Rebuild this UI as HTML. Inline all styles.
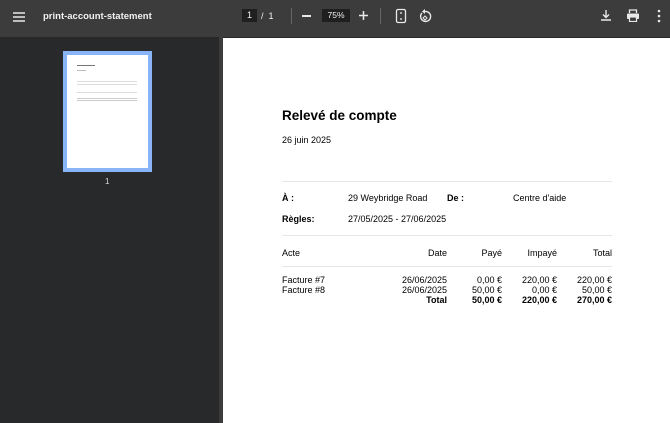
<!DOCTYPE html>
<html><head><meta charset="utf-8"><style>
*{margin:0;padding:0;box-sizing:border-box}
body{width:670px;height:423px;overflow:hidden;background:#282828;font-family:"Liberation Sans",Arial,sans-serif;position:relative}
.tb{position:absolute;left:0;top:0;width:670px;height:37px;background:#3c3c3c;color:#f1f1f1}
.side{position:absolute;left:0;top:37px;width:219px;height:386px;background:#28292b}
.sep{position:absolute;left:219px;top:37px;width:4px;height:386px;background:#3c3c3c}
.page{position:absolute;left:223px;top:38px;width:447px;height:385px;background:#fff;color:#000}
.t{position:absolute;white-space:nowrap}
.r{text-align:right}
.hr{position:absolute;left:59px;width:330px;height:1px;background:#e6e6e6}
</style></head><body>
<div class="tb">
 <svg class="t" style="left:12px;top:10px" width="14" height="14"><path d="M1 3h12M1 7h12M1 11h12" stroke="#e8e8e8" stroke-width="1.6"/></svg>
 <div class="t" style="left:43px;top:11px;font-size:9.5px;font-weight:bold">print-account-statement</div>
 <div class="t" style="left:242px;top:9px;width:15px;height:13px;background:#1f1f1f;font-size:9px;text-align:center;line-height:13px">1</div>
 <div class="t" style="left:261px;top:11px;font-size:9px">/ &nbsp;1</div>
 <div class="t" style="left:291px;top:8px;width:1px;height:16px;background:#666"></div>
 <div class="t" style="left:302px;top:15px;width:9px;height:1.5px;background:#e8e8e8"></div>
 <div class="t" style="left:322px;top:9px;width:28px;height:13px;background:#1f1f1f;font-size:8.5px;text-align:center;line-height:13px">75%</div>
 <svg class="t" style="left:358px;top:10px" width="11" height="11"><path d="M5.5 1v9M1 5.5h9" stroke="#e8e8e8" stroke-width="1.5"/></svg>
 <div class="t" style="left:380px;top:8px;width:1px;height:16px;background:#666"></div>
 <svg class="t" style="left:395px;top:8px" width="12" height="16"><rect x="1.5" y="1.5" width="9" height="13" rx="1.5" fill="none" stroke="#e8e8e8" stroke-width="1.3"/><path d="M6 4v2M6 10v2" stroke="#e8e8e8" stroke-width="1.3"/></svg>
 <svg class="t" style="left:418px;top:8px" width="14" height="15"><path d="M4 5a5 5 0 1 0 3-1.5" fill="none" stroke="#e8e8e8" stroke-width="1.4"/><path d="M7 1v5l-3-2.5z" fill="#e8e8e8"/><path d="M7 8l2 2-2 2-2-2z" fill="none" stroke="#e8e8e8" stroke-width="1"/></svg>
 <svg class="t" style="left:600px;top:9px" width="12" height="13"><path d="M6 1v7M3 5.5l3 3 3-3M1 11h10" fill="none" stroke="#e8e8e8" stroke-width="1.4"/></svg>
 <svg class="t" style="left:626px;top:9px" width="14" height="13"><path d="M3.5 4V1h7v3" fill="none" stroke="#e8e8e8" stroke-width="1.3"/><rect x="1" y="4.5" width="12" height="5.5" rx="1" fill="#e8e8e8"/><rect x="3.5" y="8" width="7" height="4.5" fill="#3c3c3c" stroke="#e8e8e8" stroke-width="1.2"/></svg>
 <svg class="t" style="left:657px;top:9px" width="4" height="14"><circle cx="2" cy="2" r="1.3" fill="#e8e8e8"/><circle cx="2" cy="7" r="1.3" fill="#e8e8e8"/><circle cx="2" cy="12" r="1.3" fill="#e8e8e8"/></svg>
</div>
<div class="side">
 <div class="t" style="left:63px;top:14px;width:89px;height:121px;background:#8ab4f8"></div>
 <div class="t" style="left:67px;top:18px;width:81px;height:113px;background:#fff">
  <div class="t" style="left:10px;top:10px;width:18px;height:1px;background:#777"></div>
  <div class="t" style="left:10px;top:15px;width:9px;height:1px;background:#bbb"></div>
  <div class="t" style="left:10px;top:26px;width:60px;height:1px;background:#ddd"></div>
  <div class="t" style="left:10px;top:29px;width:60px;height:1px;background:#ddd"></div>
  <div class="t" style="left:10px;top:37px;width:60px;height:1px;background:#ddd"></div>
  <div class="t" style="left:10px;top:43px;width:60px;height:1px;background:#ccc"></div>
  <div class="t" style="left:10px;top:45px;width:60px;height:1px;background:#ccc"></div>
 </div>
 <div class="t" style="left:105px;top:140px;font-size:8px;color:#ddd">1</div>
</div>
<div class="sep"></div>
<div class="page">
 <div class="t" style="left:59px;top:70px;font-size:13.5px;font-weight:bold">Relevé de compte</div>
 <div class="t" style="left:59px;top:97px;font-size:9px">26 juin 2025</div>
 <div class="hr" style="top:143px"></div>
 <div class="t" style="left:59px;top:155px;font-size:9px;font-weight:bold">À :</div>
 <div class="t" style="left:125px;top:155px;font-size:9px">29 Weybridge Road</div>
 <div class="t" style="left:224px;top:155px;font-size:9px;font-weight:bold">De :</div>
 <div class="t" style="left:290px;top:155px;font-size:9px">Centre d'aide</div>
 <div class="t" style="left:59px;top:176px;font-size:9px;font-weight:bold">Règles:</div>
 <div class="t" style="left:125px;top:176px;font-size:9px">27/05/2025 - 27/06/2025</div>
 <div class="hr" style="top:197px"></div>
 <div class="t" style="left:59px;top:210px;font-size:9px">Acte</div>
 <div class="t r" style="left:164px;width:60px;top:210px;font-size:9px">Date</div>
 <div class="t r" style="left:219px;width:60px;top:210px;font-size:9px">Payé</div>
 <div class="t r" style="left:274px;width:60px;top:210px;font-size:9px">Impayé</div>
 <div class="t r" style="left:329px;width:60px;top:210px;font-size:9px">Total</div>
 <div class="hr" style="top:228px"></div>
 <div class="t" style="left:59px;top:237px;font-size:9px;line-height:10px">Facture #7<br>Facture #8</div>
 <div class="t r" style="left:144px;width:80px;top:237px;font-size:9px;line-height:10px">26/06/2025<br>26/06/2025<br><b>Total</b></div>
 <div class="t r" style="left:219px;width:60px;top:237px;font-size:9px;line-height:10px">0,00 €<br>50,00 €<br><b>50,00 €</b></div>
 <div class="t r" style="left:274px;width:60px;top:237px;font-size:9px;line-height:10px">220,00 €<br>0,00 €<br><b>220,00 €</b></div>
 <div class="t r" style="left:329px;width:60px;top:237px;font-size:9px;line-height:10px">220,00 €<br>50,00 €<br><b>270,00 €</b></div>
</div>
</body></html>
